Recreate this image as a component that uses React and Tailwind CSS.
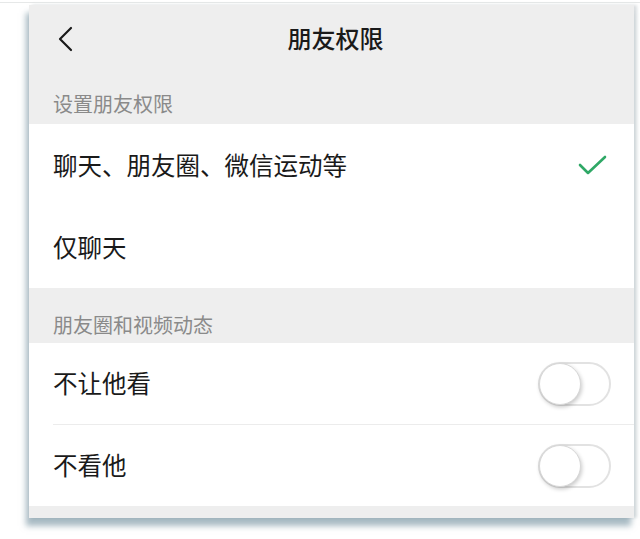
import React from "react";

const font = { fontFamily: '"Noto Sans CJK SC", "Noto Sans", sans-serif' };

function Toggle() {
  return (
    <div className="relative w-[73px] h-[44px] rounded-full border-2 border-[#e2e2e2] bg-white">
      <div className="absolute left-[-1px] top-[-1px] w-[42px] h-[42px] rounded-full bg-white border border-[#d8d8d8] shadow-[1px_2px_4px_rgba(0,0,0,0.22)]" />
    </div>
  );
}

function Check() {
  return (
    <svg width="30" height="22" viewBox="0 0 30 22" fill="none">
      <path d="M2 11 L10 19 L27 3" stroke="#2fa866" strokeWidth="2.6" strokeLinecap="round" strokeLinejoin="round" />
    </svg>
  );
}

export default function App() {
  return (
    <div className="w-[640px] h-[539px] bg-white overflow-hidden" style={font}>
      <div className="h-[2px]" />
      <div className="h-px bg-[#e6e8e8]" />
      <div className="ml-[29px] mt-[2px] w-[605px] bg-[#eeeeee] shadow-[-3px_8px_6px_rgba(110,140,155,0.6),3px_0_3px_rgba(150,160,165,0.35)]">
        <div className="h-[75px] flex items-center relative">
          <svg className="absolute left-[28px] top-[21px]" width="18" height="26" viewBox="0 0 18 26" fill="none">
            <path d="M14 2 L3 13 L14 24" stroke="#1a1a1a" strokeWidth="2.2" strokeLinecap="round" strokeLinejoin="round" />
          </svg>
          <div className="w-full text-center text-[24px] font-medium text-[#1a1a1a] leading-none pl-[8px] pb-[10px]">朋友权限</div>
        </div>
        <div className="h-[44px] flex items-center pt-[4px] pl-[24px] text-[20px] text-[#8a8a8a] leading-none">设置朋友权限</div>
        <div className="bg-white">
          <div className="h-[82px] flex items-center justify-between pl-[24px] pr-[26px] text-[24.5px] text-[#1a1a1a] leading-none">
            <span>聊天、朋友圈、微信运动等</span>
            <Check />
          </div>
          <div className="h-[82px] flex items-center pl-[24px] text-[24.5px] text-[#1a1a1a] leading-none">
            <span>仅聊天</span>
          </div>
        </div>
        <div className="h-[55px] flex items-end pb-[8px] pl-[24px] text-[20px] text-[#8a8a8a] leading-none">朋友圈和视频动态</div>
        <div className="bg-white">
          <div className="h-[81px] flex items-center justify-between pl-[24px] pr-[23px] text-[24.5px] text-[#1a1a1a] leading-none">
            <span>不让他看</span>
            <Toggle />
          </div>
          <div className="ml-[24px] h-px bg-[#ececec]" />
          <div className="h-[81px] flex items-center justify-between pl-[24px] pr-[23px] text-[24.5px] text-[#1a1a1a] leading-none">
            <span>不看他</span>
            <Toggle />
          </div>
        </div>
        <div className="h-[12px]" />
      </div>
    </div>
  );
}
